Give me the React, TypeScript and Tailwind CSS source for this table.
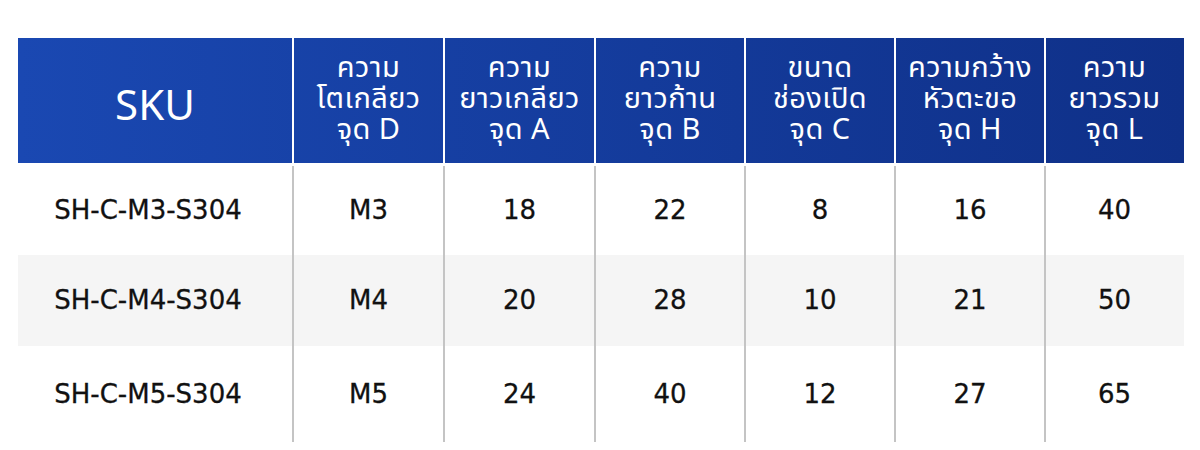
const headers = [
  ["ความ", "โตเกลียว", "จุด D"],
  ["ความ", "ยาวเกลียว", "จุด A"],
  ["ความ", "ยาวก้าน", "จุด B"],
  ["ขนาด", "ช่องเปิด", "จุด C"],
  ["ความกว้าง", "หัวตะขอ", "จุด H"],
  ["ความ", "ยาวรวม", "จุด L"],
];

const rows = [
  { sku: "SH-C-M3-S304", vals: ["M3", "18", "22", "8", "16", "40"], h: "h-[89px]", bg: "bg-white" },
  { sku: "SH-C-M4-S304", vals: ["M4", "20", "28", "10", "21", "50"], h: "h-[91px]", bg: "bg-[#f5f5f5]" },
  { sku: "SH-C-M5-S304", vals: ["M5", "24", "40", "12", "27", "65"], h: "h-[96px]", bg: "bg-white" },
];

const cols = "grid grid-cols-[274px_151px_151px_150px_150px_150px_139px]";

export default function App() {
  return (
    <div
      className="w-[1200px] h-[450px] bg-white pt-[38px] pl-[18px]"
      style={{ fontFamily: '"Noto Sans Thai", "Noto Sans", sans-serif' }}
    >
      <div className="w-[1166px]">
        {/* Header */}
        <div className={`${cols} h-[125px] bg-gradient-to-r from-[#1a48b2] to-[#0f3088] text-white`}>
          <div className="flex items-center justify-center text-[42px] leading-none pt-[12px]">SKU</div>
          {headers.map((lines, i) => (
            <div
              key={i}
              className="flex flex-col items-center justify-center border-l-2 border-white text-[29px] leading-[31px] pb-[3px] tracking-[0.4px]"
            >
              {lines.map((l) => (
                <span key={l}>{l}</span>
              ))}
            </div>
          ))}
        </div>

        {/* Body */}
        <div className="mt-[3px]" style={{ fontFamily: '"DejaVu Sans", sans-serif' }}>
          {rows.map((r) => (
            <div
              key={r.sku}
              className={`${cols} ${r.h} ${r.bg} text-[#111] text-[26px] [-webkit-text-stroke:0.3px_#111]`}
            >
              <div className="flex items-center justify-center pr-[14px]">{r.sku}</div>
              {r.vals.map((v, i) => (
                <div key={i} className="flex items-center justify-center border-l-2 border-[#c4c4c4]">
                  {v}
                </div>
              ))}
            </div>
          ))}
        </div>
      </div>
    </div>
  );
}
